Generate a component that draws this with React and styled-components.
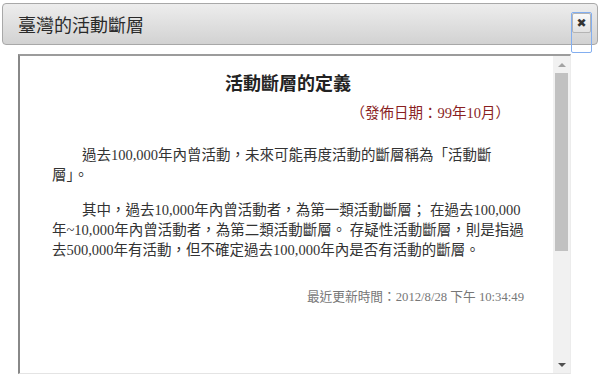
import React from 'react'
import styled, { createGlobalStyle } from 'styled-components'

const Global = createGlobalStyle`
  html, body {
    margin: 0;
    background: #fff;
  }
  body {
    font-family: "Liberation Serif", "Noto Sans CJK TC", serif;
    color: #333;
  }
`

const Page = styled.div`
  width: 600px;
  height: 384px;
  padding: 3px 2px 0 2px;
  box-sizing: border-box;
  position: relative;
`

const Header = styled.div`
  height: 42px;
  box-sizing: border-box;
  border: 1px solid #a8a8a8;
  border-radius: 4px;
  background: linear-gradient(#ededed, #d2d2d2);
  display: flex;
  align-items: center;
  padding-left: 15px;
`

const Title = styled.h1`
  margin: 0;
  font-family: "Noto Sans CJK TC", sans-serif;
  font-weight: 400;
  font-size: 18px;
  color: #2a2a2a;
`

// 關閉鈕，外框的藍色焦點框會蓋到下方的內容
const Close = styled.button`
  position: absolute;
  right: 8px;
  top: 12px;
  width: 21px;
  height: 41px;
  padding: 0;
  box-sizing: border-box;
  border: 1px solid #82aef0;
  border-radius: 2px;
  background: transparent;
  display: flex;
  flex-direction: column;
  cursor: pointer;
`

const CloseFace = styled.span`
  height: 20px;
  box-sizing: border-box;
  border: 1px solid #b4b4b4;
  border-radius: 2px;
  background: linear-gradient(#fafafa, #e2e2e2);
  display: flex;
  align-items: center;
  justify-content: center;
  font-family: "DejaVu Sans", sans-serif;
  font-weight: 700;
  font-size: 12px;
  color: #333;
`

const Frame = styled.div`
  margin: 9px 27px 0 16px;
  height: 320px;
  box-sizing: border-box;
  border-top: 2px solid #9c9c9c;
  border-left: 2px solid #888;
  border-right: 1px solid #ececec;
  border-bottom: 1px solid #e4e4e4;
  display: flex;
`

const Doc = styled.div`
  flex: 1;
  padding: 14px 0 0 32px;
  font-size: 14.5px;
`

const DocTitle = styled.h2`
  margin: 0;
  width: 472px;
  text-align: center;
  font-family: "Noto Sans CJK TC", sans-serif;
  font-size: 18px;
  line-height: 24px;
  font-weight: 700;
  color: #222;
`

const DateLine = styled.div`
  margin-top: 9px;
  width: 458px;
  text-align: right;
  font-size: 14.5px;
  line-height: 20px;
  color: #8a1f1f;
`

const Para = styled.p`
  margin: ${p => p.$top}px 0 0 0;
  width: 472px;
  text-indent: 30px;
  line-height: 20px;
  color: #333;
`

const Updated = styled.div`
  margin-top: 27px;
  width: 472px;
  text-align: right;
  font-size: 12.7px;
  line-height: 20px;
  color: #777;
`

const Scroll = styled.div`
  width: 17px;
  background: #f1f1f1;
  display: flex;
  flex-direction: column;
  align-items: center;
`

const Arrow = styled.div`
  height: 17px;
  display: flex;
  align-items: center;
  justify-content: center;
`

const Track = styled.div`
  flex: 1;
  align-self: stretch;
  padding: 0 2px;
`

const Thumb = styled.div`
  height: 178px;
  background: #c1c1c1;
`

function Tri({ down, color }) {
  return (
    <svg width="8" height="4" viewBox="0 0 8 4">
      <path d={down ? 'M0 0H8L4 4Z' : 'M0 4H8L4 0Z'} fill={color} />
    </svg>
  )
}

export default function App() {
  return (
    <Page>
      <Global />
      <Header>
        <Title>臺灣的活動斷層</Title>
      </Header>
      <Close aria-label="close">
        <CloseFace>✖</CloseFace>
      </Close>
      <Frame>
        <Doc>
          <DocTitle>活動斷層的定義</DocTitle>
          <DateLine>（發佈日期：99年10月）</DateLine>
          <Para $top={22}>
            過去100,000年內曾活動，未來可能再度活動的斷層稱為「活動斷層」。
          </Para>
          <Para $top={15}>
            其中，過去10,000年內曾活動者，為第一類活動斷層； 在過去100,000年~10,000年內曾活動者，為第二類活動斷層。 存疑性活動斷層，則是指過去500,000年有活動，但不確定過去100,000年內是否有活動的斷層。
          </Para>
          <Updated>最近更新時間：2012/8/28 下午 10:34:49</Updated>
        </Doc>
        <Scroll>
          <Arrow><Tri color="#a3a3a3" /></Arrow>
          <Track><Thumb /></Track>
          <Arrow><Tri down color="#505050" /></Arrow>
        </Scroll>
      </Frame>
    </Page>
  )
}
